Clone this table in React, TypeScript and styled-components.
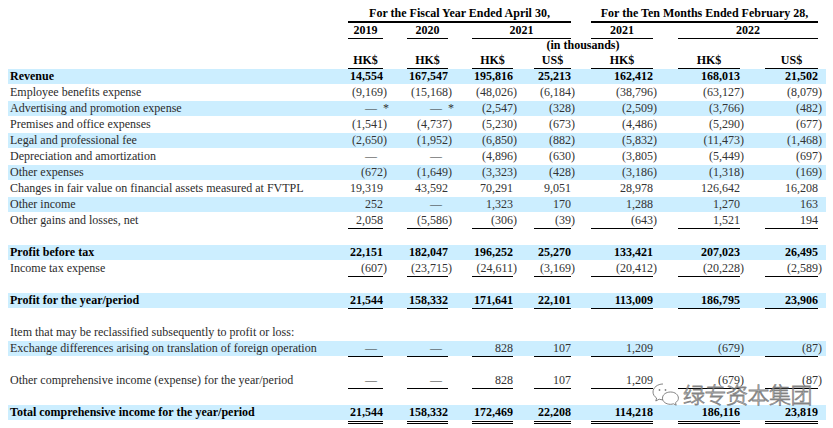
import React from "react";
import styled, { createGlobalStyle, css } from "styled-components";

const GlobalStyle = createGlobalStyle`
  html, body {
    margin: 0;
    padding: 0;
    background: #fff;
  }
  body {
    font-family: "Liberation Serif", "Times New Roman", serif;
    font-size: 12px;
    color: #2b2b2b;
  }
`;

const SHADE = "#cceeff";

// data columns: width and left gap
const COLS = [
	{ w: 35, ml: 0 },
	{ w: 41, ml: 24 },
	{ w: 41, ml: 24 },
	{ w: 37, ml: 21 },
	{ w: 62, ml: 20 },
	{ w: 62, ml: 25 },
	{ w: 53, ml: 25 },
];

const span = (from: number, to: number) => {
	let w = 0;
	for (let i = from; i <= to; i++) w += (i === from ? 0 : COLS[i].ml) + COLS[i].w;
	return w;
};

const Page = styled.div`
  position: relative;
  width: 833px;
  height: 428px;
  overflow: hidden;
  padding: 4px 7px 0 8px;
  box-sizing: border-box;
`;

const Row = styled.div<{ $shade?: boolean; $h?: number }>`
  display: flex;
  align-items: flex-start;
  height: ${({ $h }) => $h ?? 16}px;
  line-height: ${({ $h }) => ($h ?? 16) - 1}px;
  background: ${({ $shade }) =>
		$shade ? `linear-gradient(${SHADE}, ${SHADE}) top left / 100% 15px no-repeat` : "none"};
`;

const Label = styled.div<{ $bold?: boolean }>`
  flex: none;
  width: 338px;
  padding-left: 2px;
  white-space: nowrap;
  font-weight: ${({ $bold }) => ($bold ? 700 : 400)};
  color: ${({ $bold }) => ($bold ? "#000" : "#2b2b2b")};
`;

const Cell = styled.div<{ $w: number; $ml: number; $rule?: "single" | "double"; $bold?: boolean }>`
  flex: none;
  width: ${({ $w }) => $w}px;
  margin-left: ${({ $ml }) => $ml}px;
  height: 16px;
  box-sizing: border-box;
  text-align: right;
  white-space: nowrap;
  font-weight: ${({ $bold }) => ($bold ? 700 : 400)};
  color: ${({ $bold }) => ($bold ? "#000" : "#333")};
  ${({ $rule }) =>
		$rule === "single" &&
		css`
      border-bottom: 1px solid #000;
    `}
  ${({ $rule }) =>
		$rule === "double" &&
		css`
      height: 19px;
      border-bottom: 3px double #000;
    `}
`;

const HeadCell = styled.div<{ $w: number; $ml: number; $rule?: number }>`
  flex: none;
  width: ${({ $w }) => $w}px;
  margin-left: ${({ $ml }) => $ml}px;
  text-align: center;
  white-space: nowrap;
  font-weight: 700;
  color: #000;
  box-sizing: border-box;
  border-bottom: ${({ $rule }) => ($rule ? `${$rule}px solid #000` : "none")};
`;

const HeadRow = styled.div<{ $h: number }>`
  display: flex;
  height: ${({ $h }) => $h}px;
  line-height: ${({ $h }) => $h - 1}px;
  padding-left: 340px;
`;

const Dash = styled.span`
  margin-right: 6px;
`;

const Hang = styled.span`
  display: inline-block;
  width: 0;
  text-align: left;
`;

const Watermark = styled.div`
  position: absolute;
  left: 651px;
  top: 377px;
  display: flex;
  align-items: center;
  gap: 3px;
  pointer-events: none;
`;

const WatermarkText = styled.span`
  font-family: "Noto Sans CJK SC", sans-serif;
  font-size: 22px;
  font-weight: 300;
  letter-spacing: -0.5px;
  color: rgba(235, 235, 235, 0.5);
  -webkit-text-stroke: 0.8px rgba(100, 100, 100, 0.8);
`;

function Amount({ v }: { v: string }) {
	if (v === "—") return <Dash>—</Dash>;
	if (v === "— *")
		return (
			<>
				<Dash>—</Dash>
				<Hang>*</Hang>
			</>
		);
	if (v.endsWith(")"))
		return (
			<>
				{v.slice(0, -1)}
				<Hang>)</Hang>
			</>
		);
	return <>{v}</>;
}

type Line = {
	label?: string;
	bold?: boolean;
	shade?: boolean;
	rule?: "single" | "double";
	v?: string[];
};

const LINES: Line[] = [
	{ label: "Revenue", bold: true, shade: true, v: ["14,554", "167,547", "195,816", "25,213", "162,412", "168,013", "21,502"] },
	{ label: "Employee benefits expense", v: ["(9,169)", "(15,168)", "(48,026)", "(6,184)", "(38,796)", "(63,127)", "(8,079)"] },
	{ label: "Advertising and promotion expense", shade: true, v: ["— *", "— *", "(2,547)", "(328)", "(2,509)", "(3,766)", "(482)"] },
	{ label: "Premises and office expenses", v: ["(1,541)", "(4,737)", "(5,230)", "(673)", "(4,486)", "(5,290)", "(677)"] },
	{ label: "Legal and professional fee", shade: true, v: ["(2,650)", "(1,952)", "(6,850)", "(882)", "(5,832)", "(11,473)", "(1,468)"] },
	{ label: "Depreciation and amortization", v: ["—", "—", "(4,896)", "(630)", "(3,805)", "(5,449)", "(697)"] },
	{ label: "Other expenses", shade: true, v: ["(672)", "(1,649)", "(3,323)", "(428)", "(3,186)", "(1,318)", "(169)"] },
	{ label: "Changes in fair value on financial assets measured at FVTPL", v: ["19,319", "43,592", "70,291", "9,051", "28,978", "126,642", "16,208"] },
	{ label: "Other income", shade: true, v: ["252", "—", "1,323", "170", "1,288", "1,270", "163"] },
	{ label: "Other gains and losses, net", rule: "single", v: ["2,058", "(5,586)", "(306)", "(39)", "(643)", "1,521", "194"] },
	{},
	{ label: "Profit before tax", bold: true, shade: true, v: ["22,151", "182,047", "196,252", "25,270", "133,421", "207,023", "26,495"] },
	{ label: "Income tax expense", rule: "single", v: ["(607)", "(23,715)", "(24,611)", "(3,169)", "(20,412)", "(20,228)", "(2,589)"] },
	{},
	{ label: "Profit for the year/period", bold: true, shade: true, rule: "single", v: ["21,544", "158,332", "171,641", "22,101", "113,009", "186,795", "23,906"] },
	{},
	{ label: "Item that may be reclassified subsequently to profit or loss:" },
	{ label: "Exchange differences arising on translation of foreign operation", shade: true, rule: "single", v: ["—", "—", "828", "107", "1,209", "(679)", "(87)"] },
	{},
	{ label: "Other comprehensive income (expense) for the year/period", rule: "single", v: ["—", "—", "828", "107", "1,209", "(679)", "(87)"] },
	{},
	{ label: "Total comprehensive income for the year/period", bold: true, shade: true, rule: "double", v: ["21,544", "158,332", "172,469", "22,208", "114,218", "186,116", "23,819"] },
];

const WeChatIcon = () => (
	<svg width="29" height="25" viewBox="0 0 29 25" fill="none" stroke="rgba(110,110,110,0.85)" strokeWidth="1">
		<path d="M12 3 C6.5 3 2 6.6 2 11 C2 13.5 3.4 15.6 5.6 17 L4.8 20 L8.2 18.2 C9.4 18.6 10.6 18.8 12 18.8" />
		<circle cx="8.5" cy="9" r="0.9" fill="rgba(110,110,110,0.85)" stroke="none" />
		<circle cx="14.5" cy="9" r="0.9" fill="rgba(110,110,110,0.85)" stroke="none" />
		<path d="M19.5 11 C14.8 11 11.5 13.8 11.5 17.2 C11.5 20.6 14.8 23.3 19.5 23.3 C20.6 23.3 21.5 23.1 22.4 22.8 L25.2 24.2 L24.5 21.7 C26.3 20.5 27.4 19 27.4 17.2 C27.4 13.8 24.2 11 19.5 11 Z" />
	</svg>
);

export default function App() {
	return (
		<>
			<GlobalStyle />
			<Page>
				<HeadRow $h={19}>
					<HeadCell $w={span(0, 3)} $ml={0} $rule={2}>For the Fiscal Year Ended April 30,</HeadCell>
					<HeadCell $w={span(4, 6)} $ml={COLS[4].ml} $rule={2}>For the Ten Months Ended February 28,</HeadCell>
				</HeadRow>
				<HeadRow $h={16}>
					<HeadCell $w={COLS[0].w} $ml={0} $rule={1}>2019</HeadCell>
					<HeadCell $w={COLS[1].w} $ml={COLS[1].ml} $rule={1}>2020</HeadCell>
					<HeadCell $w={span(2, 3)} $ml={COLS[2].ml} $rule={1}>2021</HeadCell>
					<HeadCell $w={COLS[4].w} $ml={COLS[4].ml} $rule={1}>2021</HeadCell>
					<HeadCell $w={span(5, 6)} $ml={COLS[5].ml} $rule={1}>2022</HeadCell>
				</HeadRow>
				<HeadRow $h={14}>
					<HeadCell $w={span(0, 6)} $ml={0}>(in thousands)</HeadCell>
				</HeadRow>
				<HeadRow $h={16}>
					{["HK$", "HK$", "HK$", "US$", "HK$", "HK$", "US$"].map((c, i) => (
						<HeadCell key={i} $w={COLS[i].w} $ml={COLS[i].ml} $rule={1}>
							{c}
						</HeadCell>
					))}
				</HeadRow>
				{LINES.map((line, i) => (
					<Row key={i} $shade={line.shade}>
						<Label $bold={line.bold}>{line.label}</Label>
						{line.v?.map((v, j) => (
							<Cell key={j} $w={COLS[j].w} $ml={COLS[j].ml} $rule={line.rule} $bold={line.bold}>
								<Amount v={v} />
							</Cell>
						))}
					</Row>
				))}
				<Watermark>
					<WeChatIcon />
					<WatermarkText>绿专资本集团</WatermarkText>
				</Watermark>
			</Page>
		</>
	);
}
